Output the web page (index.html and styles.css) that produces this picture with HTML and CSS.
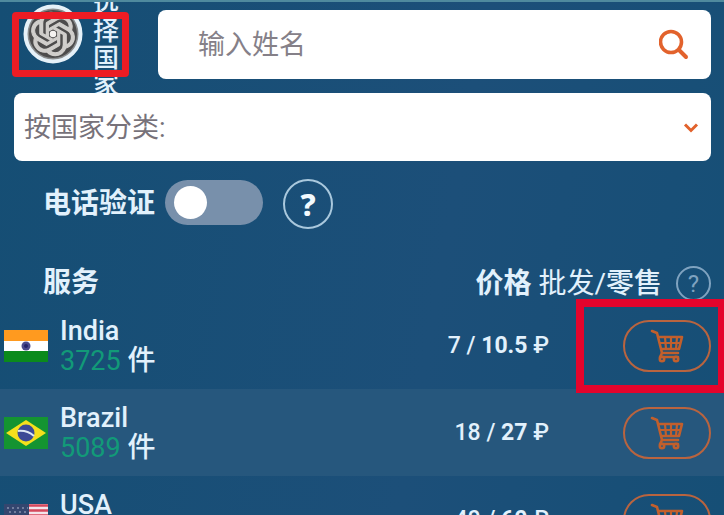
FILE: index.html
```html
<!DOCTYPE html>
<html lang="zh-CN">
<head>
<meta charset="utf-8">
<meta name="viewport" content="width=device-width, initial-scale=1">
<title>选择国家</title>
<link rel="stylesheet" href="styles.css">
</head>
<body>
<svg class="defs" aria-hidden="true">
  <symbol id="cart" viewBox="0 0 34 34">
    <g fill="none" stroke="currentColor" stroke-width="2.6" stroke-linecap="round" stroke-linejoin="round">
      <path d="M2 2l5 2 5 20h16M9 8h23l-3 12H12"/>
      <path d="M15 8l1 12M21 8v12M27 8l-1 12M10 14h20" stroke-width="2.2"/>
      <path d="M12 24l-2 4h18"/>
      <circle cx="12" cy="30" r="2.2"/>
      <circle cx="26" cy="30" r="2.2"/>
    </g>
  </symbol>
</svg>
<header class="top">
  <div class="service">
    <svg class="logo" viewBox="0 0 60 60" role="img" aria-label="OpenAI">
      <circle cx="30" cy="30" r="27.5" fill="#8b8d8e" stroke="#e6f1f8" stroke-width="4"/>
      <circle cx="30" cy="30" r="24" fill="#4d4c4c"/>
      <g transform="translate(8.400 8.400) scale(1.8)">
        <path fill="#d0cecb" stroke="#d0cecb" stroke-width=".7" d="M22.2819 9.8211a5.9847 5.9847 0 0 0-.5157-4.9108 6.0462 6.0462 0 0 0-6.5098-2.9A6.0651 6.0651 0 0 0 4.9807 4.1818a5.9847 5.9847 0 0 0-3.9977 2.9 6.0462 6.0462 0 0 0 .7427 7.0966 5.98 5.98 0 0 0 .511 4.9107 6.051 6.051 0 0 0 6.5146 2.9001A5.9847 5.9847 0 0 0 13.2599 24a6.0557 6.0557 0 0 0 5.7718-4.2058 5.9894 5.9894 0 0 0 3.9977-2.9001 6.0557 6.0557 0 0 0-.7475-7.0729zm-9.022 12.6081a4.4755 4.4755 0 0 1-2.8764-1.0408l.1419-.0804 4.7783-2.7582a.7948.7948 0 0 0 .3927-.6813v-6.7369l2.02 1.1686a.071.071 0 0 1 .038.0615v5.5826a4.504 4.504 0 0 1-4.4945 4.4849zm-9.6607-4.1254a4.4708 4.4708 0 0 1-.5346-3.0137l.142.0852 4.783 2.7582a.7712.7712 0 0 0 .7806 0l5.8428-3.3685v2.3324a.0804.0804 0 0 1-.0332.0615L9.74 19.9502a4.4992 4.4992 0 0 1-6.1408-1.6464zM2.3408 7.8956a4.485 4.485 0 0 1 2.3655-1.9728V11.6a.7664.7664 0 0 0 .3879.6765l5.8144 3.3543-2.0201 1.1685a.0757.0757 0 0 1-.071 0l-4.8303-2.7865A4.504 4.504 0 0 1 2.3408 7.872zm16.5963 3.8558L13.1038 8.364 15.1192 7.2a.0757.0757 0 0 1 .071 0l4.8303 2.7913a4.4944 4.4944 0 0 1-.6765 8.1042v-5.6772a.79.79 0 0 0-.407-.667zm2.0107-3.0231l-.142-.0852-4.7735-2.7818a.7759.7759 0 0 0-.7854 0L9.409 9.2297V6.8974a.0662.0662 0 0 1 .0284-.0615l4.8303-2.7866a4.4992 4.4992 0 0 1 6.6802 4.66zM8.3065 12.863l-2.02-1.1638a.0804.0804 0 0 1-.038-.0567V6.0742a4.4992 4.4992 0 0 1 7.3757-3.4537l-.142.0805L8.704 5.459a.7948.7948 0 0 0-.3927.6813zm1.0976-2.3654l2.602-1.4998 2.6069 1.4998v2.9994l-2.5974 1.4997-2.6067-1.4997Z"/>
        <circle cx="12" cy="12" r="1.800" fill="#f4f2f0"/>
      </g>
    </svg>
    <span class="service-name">选择国家</span>
    <span class="mark mark-service"></span>
  </div>
  <form class="search">
    <input class="search-input" type="text" placeholder="输入姓名" aria-label="输入姓名">
    <button class="search-button" type="button" aria-label="搜索">
      <svg viewBox="0 0 32 32" width="32" height="32" fill="none" stroke="#e2622c">
        <circle cx="12" cy="13" r="10.500" stroke-width="3.600"/>
        <path d="M20 21l7 7" stroke-width="4" stroke-linecap="round"/>
      </svg>
    </button>
  </form>
</header>
<div class="sort">
  <select class="sort-select" aria-label="按国家分类"><option>按国家分类:</option></select>
  <svg class="sort-arrow" viewBox="0 0 16 12" fill="none" stroke="#e2622c" stroke-width="3"><path d="M2 2.500l6 6 6-6"/></svg>
</div>
<div class="verify">
  <label class="verify-label" for="verify">电话验证</label>
  <input class="toggle" id="verify" type="checkbox">
  <button class="help help-large" type="button">?</button>
</div>
<table class="list">
  <thead>
    <tr>
      <th class="head-service" scope="col">服务</th>
      <th class="head-price" scope="col" colspan="2">
        <div class="head-line"><span>价格 <span class="thin">批发/</span><span class="medium">零售</span></span><button class="help help-small" type="button">?</button></div>
      </th>
    </tr>
  </thead>
  <tbody>
    <tr>
      <td>
        <div class="country">
          <svg class="flag" viewBox="0 0 44 32"><path fill="#ff9a1f" d="M0 0h44v11H0z"/><path fill="#fff" d="M0 11h44v10H0z"/><path fill="#0b8a1c" d="M0 21h44v11H0z"/><circle cx="22" cy="16" r="4.500" fill="#4a4a8c"/><circle cx="22" cy="16" r="2" fill="#24246a"/></svg>
          <div><div class="name">India</div><div><span class="count">3725</span> <span class="unit">件</span></div></div>
        </div>
      </td>
      <td class="price">7 / <b>10.5</b> ₽</td>
      <td class="action"><button class="buy" type="button" aria-label="India"><svg class="cart"><use href="#cart"/></svg></button><span class="mark mark-buy"></span></td>
    </tr>
    <tr>
      <td>
        <div class="country">
          <svg class="flag" viewBox="0 0 44 32"><path fill="#149431" d="M0 0h44v32H0z"/><path fill="#f5e01c" d="M22 3l20 13-20 13L2 16z"/><circle cx="22" cy="16" r="8.500" fill="#3b4a96"/><path d="M14 14q9-1 16 5" fill="none" stroke="#dce8f4" stroke-width="2"/></svg>
          <div><div class="name">Brazil</div><div><span class="count">5089</span> <span class="unit">件</span></div></div>
        </div>
      </td>
      <td class="price">18 / <b>27</b> ₽</td>
      <td class="action"><button class="buy" type="button" aria-label="Brazil"><svg class="cart"><use href="#cart"/></svg></button></td>
    </tr>
    <tr>
      <td>
        <div class="country">
          <svg class="flag" viewBox="0 0 44 32"><path fill="#f3e4ea" d="M0 0h44v32H0z"/><path d="M0 1.500h44M0 6.500h44M0 11.500h44M0 16.500h44M0 21.500h44M0 26.500h44M0 31h44" stroke="#d5475c" stroke-width="2.500"/><path fill="#34466f" d="M0 0h25v18H0z"/><path d="M3 4h21M5 8h19M3 12h21" stroke="#8490ad" stroke-width="1.500" stroke-dasharray="2 3"/></svg>
          <div><div class="name">USA</div></div>
        </div>
      </td>
      <td class="price">40 / <b>60</b> ₽</td>
      <td class="action"><button class="buy" type="button" aria-label="USA"><svg class="cart"><use href="#cart"/></svg></button></td>
    </tr>
  </tbody>
</table>
</body>
</html>
```
FILE: styles.css
```css
* {
  box-sizing: border-box;
}

body {
  margin: 0;
  height: 100vh;
  overflow: hidden;
  border-top: 2px solid #4f8a9e;
  background: linear-gradient(100deg, #154e74, #1c4f79 60%, #164f76);
  color: #e2f1fc;
  font-family: Roboto, "Noto Sans CJK SC", sans-serif;
  font-size: 27px;
  line-height: 30px;
}

button,
input,
select {
  font-family: inherit;
}

.defs {
  position: absolute;
  width: 0;
  height: 0;
}

.top {
  display: flex;
  gap: 30px;
  height: 91px;
  padding: 8px 13px 14px 14px;
}

.service {
  position: relative;
  display: flex;
  flex: none;
  align-items: center;
  gap: 10px;
  width: 114px;
  padding-left: 9px;
}

.logo {
  flex: none;
  width: 60px;
  height: 60px;
  margin-bottom: 22px;
}

.service-name {
  width: 27px;
  font-size: 26px;
  font-weight: 500;
  line-height: 27px;
}

.mark {
  position: absolute;
  border: 7px solid #ed1c24;
  pointer-events: none;
}

.mark-service {
  inset: 2px -1px 2px -2px;
  border-radius: 4px;
}

.mark-buy {
  inset: -3px -2px -4px 27px;
  border-width: 8px;
  border-color: #e4042c;
}

.search {
  display: flex;
  flex: 1;
  align-items: center;
  padding: 0 20px 0 40px;
  border-radius: 8px;
  background: #fff;
}

.search-input {
  flex: 1;
  min-width: 0;
  padding: 0;
  border: 0;
  outline: 0;
  background: none;
  color: #77727a;
  font-size: 27px;
}

.search-input::placeholder {
  color: #858088;
}

.search-button {
  display: flex;
  padding: 0;
  border: 0;
  background: none;
}

.sort {
  position: relative;
  margin: 0 13px 0 14px;
}

.sort-select {
  display: block;
  width: 100%;
  height: 68px;
  padding: 2px 10px 0;
  border: 0;
  border-radius: 8px;
  appearance: none;
  background: #fff;
  color: #77727a;
  font-size: 27px;
}

.sort-arrow {
  position: absolute;
  top: 29px;
  right: 12px;
  width: 16px;
  height: 12px;
}

.verify {
  display: flex;
  align-items: center;
  height: 86px;
  padding-left: 43px;
}

.verify-label {
  font-size: 28px;
  font-weight: 700;
}

.toggle {
  width: 98px;
  height: 45px;
  margin: 0 20px 4px 10px;
  padding: 6px 9px;
  border-radius: 23px;
  appearance: none;
  background: #7890ab;
}

.toggle::before {
  content: "";
  display: block;
  width: 33px;
  height: 33px;
  border-radius: 50%;
  background: #fff;
}

.toggle:checked::before {
  margin-left: auto;
}

.help {
  flex: none;
  padding: 0;
  border: 2px solid #a9c8dd;
  border-radius: 50%;
  background: none;
  color: #f2faff;
}

.help-large {
  width: 50px;
  height: 50px;
  font-family: "Noto Sans", sans-serif;
  font-size: 31px;
  font-weight: 800;
}

.help-small {
  width: 35px;
  height: 35px;
  border-color: #7fa3c0;
  color: #7fa3c0;
  font-size: 24px;
}

.list {
  width: 100%;
  border-collapse: collapse;
}

.list th,
.list td {
  padding: 0;
}

.list thead tr {
  height: 55px;
}

.list tbody tr {
  height: 87px;
}

.list tbody tr:nth-child(even) {
  background: #26577d;
}

.list .head-service {
  padding: 16px 0 0 43px;
  font-size: 28px;
  text-align: left;
}

.list .head-price {
  padding: 18px 13px 0 0;
  font-size: 28px;
}

.head-line {
  display: flex;
  align-items: center;
  justify-content: flex-end;
  gap: 14px;
}

.thin {
  font-weight: 400;
}

.medium {
  font-weight: 500;
}

.country {
  display: flex;
  align-items: center;
  gap: 12px;
  padding-left: 4px;
}

.flag {
  flex: none;
  width: 44px;
  height: 32px;
}

.name {
  font-weight: 500;
}

.count {
  color: #129a78;
}

.unit {
  font-size: 28px;
  font-weight: 500;
}

.list tbody tr:last-child .country {
  height: 60px;
  align-items: center;
}

.list tbody tr:last-child .name {
  height: 60px;
}

.price {
  font-size: 23px;
  font-weight: 500;
  text-align: right;
}

.action {
  position: relative;
  width: 175px;
}

.list .action {
  padding-right: 13px;
}

.buy {
  display: flex;
  align-items: center;
  justify-content: center;
  width: 88px;
  height: 52px;
  margin-left: auto;
  padding: 0;
  border: 2px solid #b9643f;
  border-radius: 26px;
  background: none;
  color: #c25f2c;
}

.cart {
  width: 34px;
  height: 34px;
}
```
